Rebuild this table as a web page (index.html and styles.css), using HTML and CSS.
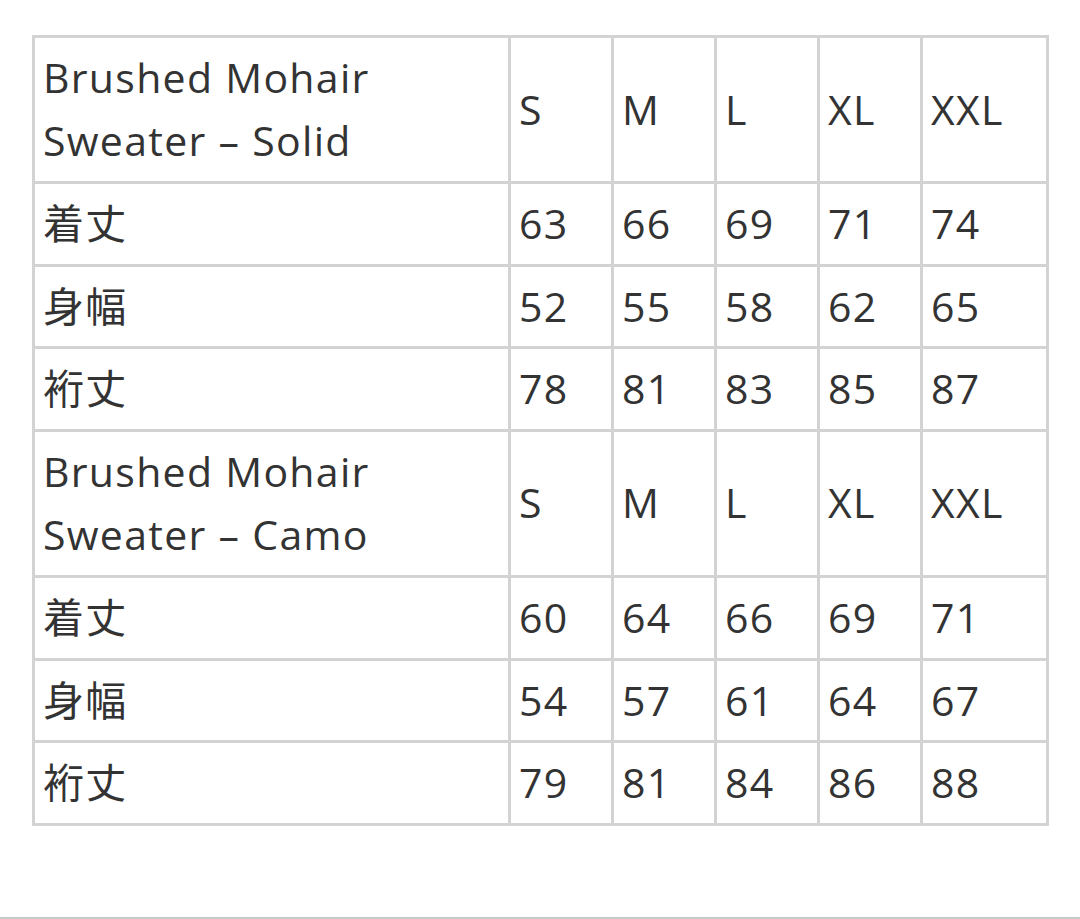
FILE: index.html
```html
<!DOCTYPE html>
<html lang="ja">
<head>
<meta charset="utf-8">
<title>Size chart</title>
<link rel="stylesheet" href="styles.css">
</head>
<body>
<main class="page">
  <table class="size-table">
    <colgroup>
      <col class="c-name">
      <col class="c-size">
      <col class="c-size">
      <col class="c-size">
      <col class="c-size">
      <col class="c-last">
    </colgroup>
    <tbody>
      <tr class="head"><td>Brushed Mohair<br>Sweater – Solid</td><td>S</td><td>M</td><td>L</td><td>XL</td><td>XXL</td></tr>
      <tr><td>着丈</td><td>63</td><td>66</td><td>69</td><td>71</td><td>74</td></tr>
      <tr><td>身幅</td><td>52</td><td>55</td><td>58</td><td>62</td><td>65</td></tr>
      <tr><td>裄丈</td><td>78</td><td>81</td><td>83</td><td>85</td><td>87</td></tr>
      <tr class="head"><td>Brushed Mohair<br>Sweater – Camo</td><td>S</td><td>M</td><td>L</td><td>XL</td><td>XXL</td></tr>
      <tr><td>着丈</td><td>60</td><td>64</td><td>66</td><td>69</td><td>71</td></tr>
      <tr><td>身幅</td><td>54</td><td>57</td><td>61</td><td>64</td><td>67</td></tr>
      <tr><td>裄丈</td><td>79</td><td>81</td><td>84</td><td>86</td><td>88</td></tr>
    </tbody>
  </table>
  <div class="bottom-rule"></div>
</main>
</body>
</html>
```
FILE: styles.css
```css
html, body {
  margin: 0;
  padding: 0;
  background: #ffffff;
}
.page {
  width: 1080px;
  height: 919px;
  position: relative;
  padding-top: 35px;
  box-sizing: border-box;
}
.size-table {
  margin-left: 32px;
  width: 1014px;
  table-layout: fixed;
  border-collapse: collapse;
  font-family: "Open Sans", "Noto Sans CJK JP", sans-serif;
  font-size: 41px;
  line-height: 63px;
  letter-spacing: 1.3px;
  color: #333333;
}
.c-name { width: 476px; }
.c-size { width: 103px; }
.c-last { width: 126px; }
.size-table td {
  border: 3px solid #d3d3d3;
  padding: 8px 8px 9px 8px;
  vertical-align: middle;
  white-space: nowrap;
}
.size-table tr:not(.head) td {
  padding-bottom: 8.67px;
}
.bottom-rule {
  position: absolute;
  left: 0;
  right: 0;
  bottom: 0;
  height: 2px;
  background: #c9c9c9;
}
```
